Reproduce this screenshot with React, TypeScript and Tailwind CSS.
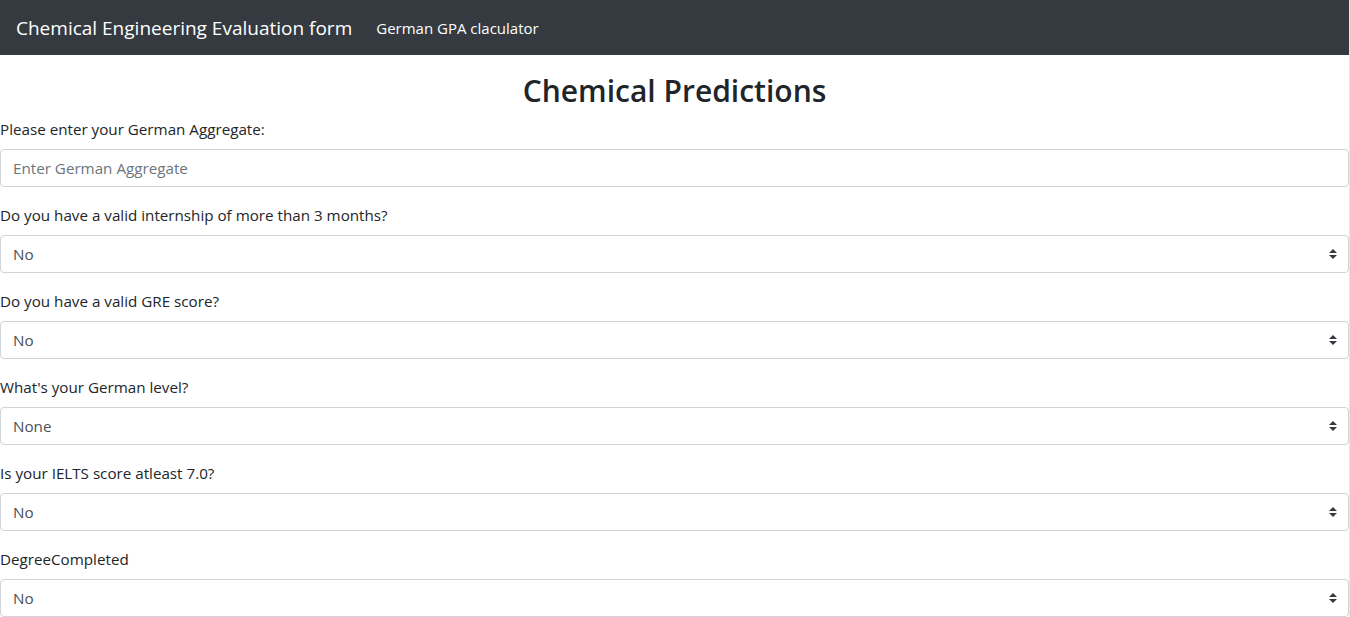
import React from 'react';

const font = { fontFamily: '"Open Sans", "Noto Sans", "Liberation Sans", sans-serif' };

function Caret() {
  return (
    <svg className="absolute right-[12px] top-1/2 -translate-y-1/2 pointer-events-none" width="8" height="10" viewBox="0 0 4 5">
      <path fill="#343a40" d="M2 0L0 2h4zm0 5L0 3h4z" />
    </svg>
  );
}

function SelectField({ label, value }: { label: string; value: string }) {
  return (
    <div className="mb-4">
      <label className="block mb-2 text-[15.2px] leading-6 text-[#212529]">{label}</label>
      <div className="relative">
        <div className="h-[38px] border border-[#ced4da] rounded-[4px] px-3 flex items-center text-[15.2px] text-[#495057] bg-white">
          {value}
        </div>
        <Caret />
      </div>
    </div>
  );
}

export default function App() {
  return (
    <div className="min-h-screen bg-white border-r border-[#e6e6e6]" style={font}>
      <nav className="h-[55px] bg-[#343a40] flex items-center px-4 pt-px">
        <span className="text-[19px] text-white mr-6">Chemical Engineering Evaluation form</span>
        <span className="text-[15px] text-white">German GPA claculator</span>
      </nav>
      <h2 className="mt-[17px] mb-[7px] text-center text-[30px] leading-[38px] font-semibold text-[#212529]">
        Chemical Predictions
      </h2>
      <form>
        <div className="mb-4">
          <label className="block mb-2 text-[15.2px] leading-6 text-[#212529]">Please enter your German Aggregate:</label>
          <input
            type="text"
            placeholder="Enter German Aggregate"
            className="w-full h-[38px] border border-[#ced4da] rounded-[4px] px-3 text-[15.2px] text-[#495057] placeholder-[#6c757d] outline-none"
          />
        </div>
        <SelectField label="Do you have a valid internship of more than 3 months?" value="No" />
        <SelectField label="Do you have a valid GRE score?" value="No" />
        <SelectField label="What's your German level?" value="None" />
        <SelectField label="Is your IELTS score atleast 7.0?" value="No" />
        <SelectField label="DegreeCompleted" value="No" />
      </form>
    </div>
  );
}
